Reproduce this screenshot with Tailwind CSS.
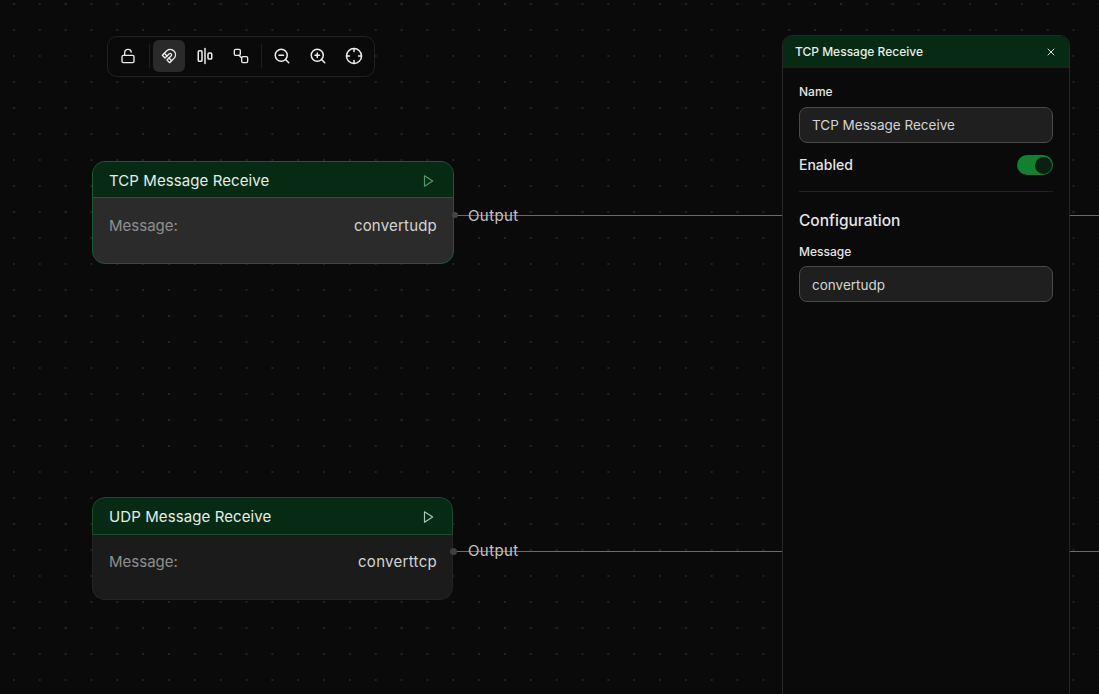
<!DOCTYPE html>
<html lang="en">
<head>
    <meta charset="UTF-8">
    <title>Flow editor</title>
    <script src="https://cdn.jsdelivr.net/npm/@tailwindcss/browser@4"></script>
</head>
<body class="bg-[#0a0a0a]">
    <div class="relative w-[1099px] h-[694px] overflow-hidden bg-[#0a0a0a] font-['Inter',sans-serif] bg-[radial-gradient(circle,#232323_0.7px,transparent_1px)] bg-[size:25.85px_26px] bg-[position:1px_-9px]">

        <!-- edges -->
        <div class="absolute left-[453px] top-[215px] w-[646px] h-px bg-[#6b6b6b]"></div>
        <div class="absolute left-[453px] top-[551px] w-[646px] h-px bg-[#6b6b6b]"></div>

        <!-- toolbar -->
        <div class="absolute left-[107px] top-[36px] w-[268px] h-[41px] flex items-center pl-1 pb-[2px] bg-[#0a0a0a] border border-[#222222] rounded-[10px] text-[#ededed]">
            <button class="w-8 h-8 flex items-center justify-center">
                <svg class="w-4 h-4" viewBox="0 0 24 24" fill="none" stroke="currentColor" stroke-width="2" stroke-linecap="round" stroke-linejoin="round"><rect x="3" y="11" width="18" height="11" rx="2"/><path d="M7 11V7a5 5 0 0 1 9.9-1"/></svg>
            </button>
            <div class="w-px h-6 bg-[#1f1f1f] ml-[5px] mr-[3px]"></div>
            <button class="w-8 h-8 flex items-center justify-center rounded-md bg-[#2a2a2a]">
                <svg class="w-4 h-4" viewBox="0 0 24 24" fill="none" stroke="currentColor" stroke-width="2" stroke-linecap="round" stroke-linejoin="round"><path d="m6 15-4-4 6.75-6.77a7.79 7.79 0 0 1 11 11L13 22l-4-4 6.39-6.36a2.14 2.14 0 0 0-3-3L6 15"/><path d="m5 8 4 4"/><path d="m12 15 4 4"/></svg>
            </button>
            <button class="w-8 h-8 ml-1 flex items-center justify-center">
                <svg class="w-[18px] h-[18px]" viewBox="0 0 24 24" fill="none" stroke="currentColor" stroke-width="2" stroke-linecap="round" stroke-linejoin="round"><rect x="3" y="5" width="5" height="14" rx="1.5"/><path d="M12 2v20"/><rect x="16" y="8" width="5" height="8" rx="1.5"/></svg>
            </button>
            <button class="w-8 h-8 ml-1 flex items-center justify-center">
                <svg class="w-4 h-4" viewBox="0 0 24 24" fill="none" stroke="currentColor" stroke-width="2" stroke-linecap="round" stroke-linejoin="round"><rect x="2" y="2" width="9" height="9" rx="2"/><rect x="13" y="13" width="9" height="9" rx="2"/><path d="M9 11l4 4"/></svg>
            </button>
            <div class="w-px h-6 bg-[#1f1f1f] ml-[4px] mr-[4px]"></div>
            <button class="w-8 h-8 flex items-center justify-center">
                <svg class="w-[18px] h-[18px]" viewBox="0 0 24 24" fill="none" stroke="currentColor" stroke-width="2" stroke-linecap="round" stroke-linejoin="round"><circle cx="11" cy="11" r="8"/><path d="m21 21-4.3-4.3"/><path d="M8 11h6"/></svg>
            </button>
            <button class="w-8 h-8 ml-1 flex items-center justify-center">
                <svg class="w-[18px] h-[18px]" viewBox="0 0 24 24" fill="none" stroke="currentColor" stroke-width="2" stroke-linecap="round" stroke-linejoin="round"><circle cx="11" cy="11" r="8"/><path d="m21 21-4.3-4.3"/><path d="M8 11h6"/><path d="M11 8v6"/></svg>
            </button>
            <button class="w-8 h-8 ml-1 flex items-center justify-center">
                <svg class="w-[18px] h-[18px]" viewBox="0 0 24 24" fill="none" stroke="currentColor" stroke-width="2" stroke-linecap="round" stroke-linejoin="round"><circle cx="12" cy="12" r="10"/><path d="M22 12h-4"/><path d="M6 12H2"/><path d="M12 6V2"/><path d="M12 22v-4"/></svg>
            </button>
        </div>

        <!-- node 1, selected -->
        <div class="absolute left-[92px] top-[161px] w-[362px] h-[103px] flex flex-col rounded-[13px] border-[1.5px] border-[#1d5a33] bg-[#2b2b2b] overflow-hidden">
            <div class="h-[36px] shrink-0 flex items-center justify-between pl-[16px] pr-[18px] pt-[3px] bg-[#072a15] border-b-[1.5px] border-[#1a5a30]">
                <span class="text-[15px] tracking-[0.08px] text-[#e3efe6]">TCP Message Receive</span>
                <svg class="w-[14px] h-[14px] -mt-px text-[#4f9a68]" viewBox="0 0 24 24" fill="none" stroke="currentColor" stroke-width="2" stroke-linecap="round" stroke-linejoin="round"><polygon points="6 3 20 12 6 21 6 3"/></svg>
            </div>
            <div class="flex justify-between pl-[16px] pr-[16px] pt-[18px] text-[15px] leading-[20px]">
                <span class="text-[#8f8f8f]">Message:</span>
                <span class="tracking-[0.2px] text-[#d4d4d4]">convertudp</span>
            </div>
        </div>
        <div class="absolute left-[452px] top-[212px] w-[6px] h-[6px] rounded-full bg-[#444444]"></div>
        <span class="absolute left-[468px] top-[206px] text-[15px] tracking-[0.4px] leading-[20px] text-[#c4c4c4]">Output</span>

        <!-- node 2 -->
        <div class="absolute left-[92px] top-[497px] w-[361px] h-[103px] flex flex-col rounded-[13px] bg-[#1b1b1b] overflow-hidden">
            <div class="h-[38px] shrink-0 flex items-center justify-between pl-4 pr-[17px] pt-[2px] bg-[#072a15] border border-[#1a4a2b] rounded-t-[13px]">
                <span class="text-[15px] tracking-[0.1px] text-[#e3efe6]">UDP Message Receive</span>
                <svg class="w-[14px] h-[14px] -mt-px text-[#a9c9b3]" viewBox="0 0 24 24" fill="none" stroke="currentColor" stroke-width="2" stroke-linecap="round" stroke-linejoin="round"><polygon points="6 3 20 12 6 21 6 3"/></svg>
            </div>
            <div class="flex-1 flex justify-between pl-4 pr-[15px] pt-[17px] text-[15px] leading-[20px] border-x border-b border-[#232323] rounded-b-[13px]">
                <span class="text-[#8f8f8f]">Message:</span>
                <span class="tracking-[0.3px] text-[#d4d4d4]">converttcp</span>
            </div>
        </div>
        <div class="absolute left-[450px] top-[548px] w-[7px] h-[7px] rounded-full bg-[#3f3f3f]"></div>
        <span class="absolute left-[468px] top-[541px] text-[15px] tracking-[0.4px] leading-[20px] text-[#c4c4c4]">Output</span>

        <!-- side panel -->
        <aside class="absolute left-[782px] top-[35px] w-[288px] h-[670px] flex flex-col rounded-t-[10px] border border-[#262626] bg-[#0a0a0a] overflow-hidden">
            <div class="h-[32px] shrink-0 flex items-center justify-between pl-3 pr-3 pb-px bg-[#072a15]">
                <span class="text-xs font-medium text-[#e3efe6]">TCP Message Receive</span>
                <svg class="w-3 h-3 text-[#dddddd]" viewBox="0 0 24 24" fill="none" stroke="currentColor" stroke-width="2" stroke-linecap="round" stroke-linejoin="round"><path d="M18 6 6 18"/><path d="m6 6 12 12"/></svg>
            </div>
            <div class="flex flex-col px-4 pt-[15px]">
                <label class="text-xs font-medium leading-[18px] text-[#e5e5e5]">Name</label>
                <div class="mt-[6px] h-9 flex items-center px-3 rounded-lg border border-[#4a4a4a] bg-[#1f1f1f] text-[13.5px] text-[#d4d4d4]">TCP Message Receive</div>
                <div class="mt-[12px] h-5 flex items-center justify-between">
                    <span class="text-sm font-medium text-[#e5e5e5]">Enabled</span>
                    <div class="w-9 h-5 flex items-center justify-end pr-px rounded-full bg-[#12802f]">
                        <div class="w-[17px] h-[17px] rounded-full bg-[#0c1f12]"></div>
                    </div>
                </div>
                <div class="mt-4 h-px bg-[#222222]"></div>
                <h3 class="mt-[17px] text-[15.5px] font-medium leading-[24px] text-[#e5e5e5]">Configuration</h3>
                <label class="mt-[10px] text-xs font-medium leading-[18px] text-[#e5e5e5]">Message</label>
                <div class="mt-[5px] h-9 flex items-center px-3 pt-[3px] rounded-lg border border-[#4a4a4a] bg-[#1f1f1f] text-[13.5px] text-[#d4d4d4]">convertudp</div>
            </div>
        </aside>
    </div>
</body>
</html>
